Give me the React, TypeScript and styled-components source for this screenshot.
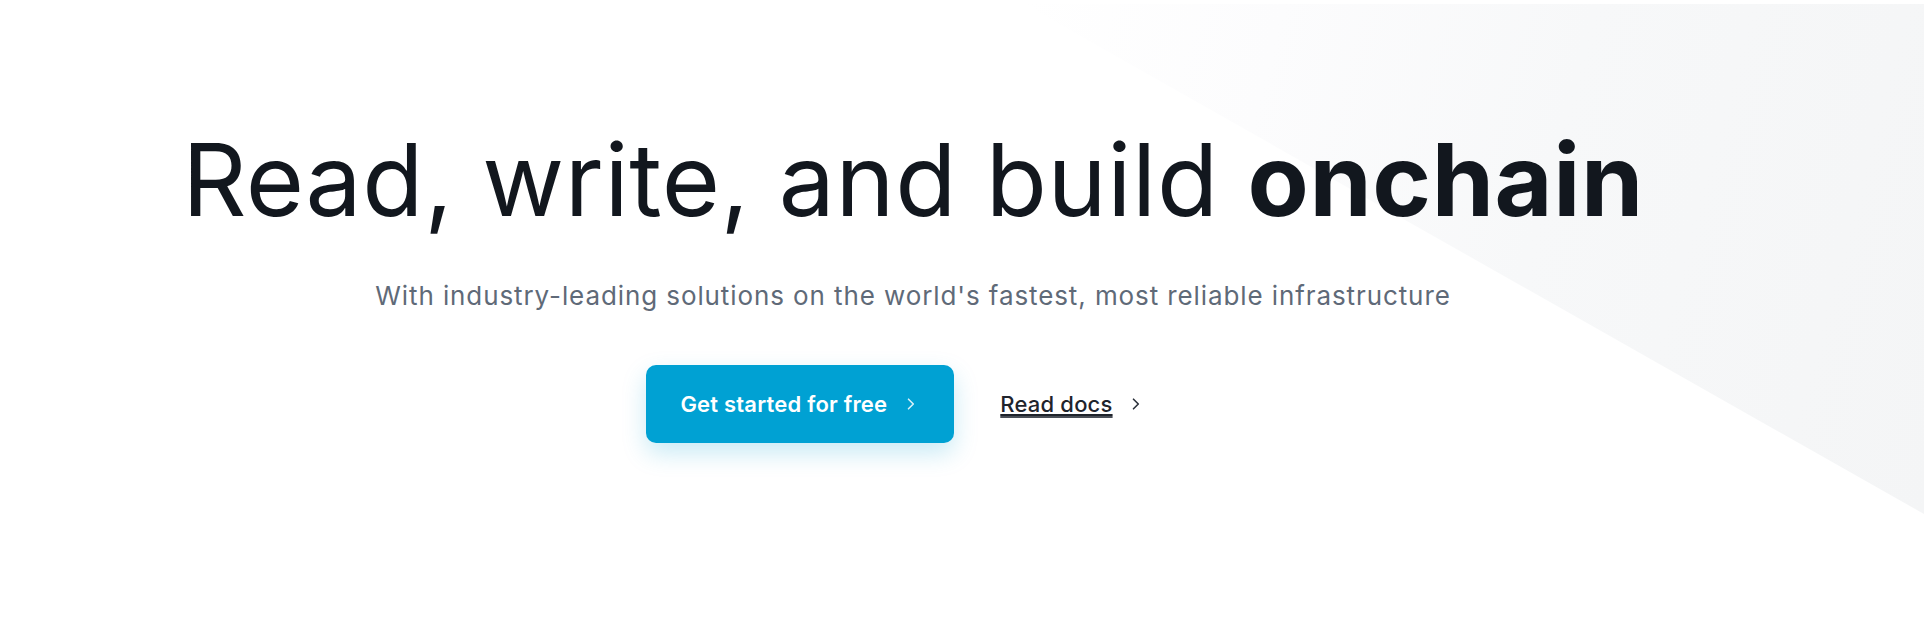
import { FC } from 'react';
import styled, { createGlobalStyle } from 'styled-components';

const Global = createGlobalStyle`
  html, body{
    margin: 0;
    padding: 0;
    background: #ffffff;
  }
  body{
    font-family: Inter, "Noto Sans", sans-serif;
    -webkit-font-smoothing: antialiased;
  }
`

const Hero = styled.section`
  position: relative;
  width: 100%;
  height: 628px;
  overflow: hidden;
  box-sizing: border-box;
  padding: 120px 106px 0 0;
  display: flex;
  flex-direction: column;
  align-items: center;
  &::before{
    content: '';
    position: absolute;
    top: 4px;
    right: 8px;
    width: 900px;
    height: 510px;
    clip-path: polygon(0 0, 100% 0, 100% 100%);
    background: linear-gradient(105deg, #ffffff 0%, #fcfcfd 25%, #f7f8f9 55%, #f4f5f6 100%);
    z-index: 0;
  }
`

const Title = styled.h1`
  position: relative;
  z-index: 1;
  margin: 0;
  font: 400 100px/120px Inter, sans-serif;
  letter-spacing: 0.6px;
  color: #12171e;
  white-space: nowrap;
  b{
    font-weight: 700;
  }
`

const Subtitle = styled.p`
  position: relative;
  z-index: 1;
  margin: 38px 0 0;
  font: 400 26px/36px Inter, sans-serif;
  letter-spacing: 0.9px;
  color: #5f6a78;
  white-space: nowrap;
`

const Actions = styled.div`
  position: relative;
  z-index: 1;
  margin: 51px 40px 0 0;
  display: flex;
  align-items: center;
  gap: 46px;
`

const PrimaryButton = styled.a`
  display: flex;
  align-items: center;
  gap: 20px;
  height: 78px;
  box-sizing: border-box;
  padding: 0 39px 0 34px;
  border-radius: 10px;
  background: #00a1d3;
  color: #ffffff;
  font: 600 22px Inter, sans-serif;
  letter-spacing: 0.2px;
  text-decoration: none;
  box-shadow: 0 10px 24px rgba(0, 161, 211, 0.22);
  svg{
    opacity: 0.85;
  }
`

const DocsLink = styled.a`
  display: flex;
  align-items: center;
  gap: 19px;
  color: #1f242c;
  font: 500 22px Inter, sans-serif;
  letter-spacing: 0.2px;
  span{
    text-decoration: underline;
    text-decoration-color: #4a4f57;
    text-underline-offset: 4px;
    text-decoration-thickness: 1.5px;
  }
`

const Chevron: FC<{ color: string }> = ({ color }) => (
  <svg width="8" height="12" viewBox="0 0 8 12" fill="none">
    <path d="M1.5 1.2L6.3 6L1.5 10.8" stroke={color} strokeWidth="1.6" strokeLinecap="round" strokeLinejoin="round" />
  </svg>
)

const App: FC = () => {
  return (
    <>
      <Global />
      <Hero>
        <Title>Read, write, and build <b>onchain</b></Title>
        <Subtitle>With industry-leading solutions on the world's fastest, most reliable infrastructure</Subtitle>
        <Actions>
          <PrimaryButton href="#">
            Get started for free
            <Chevron color="#ffffff" />
          </PrimaryButton>
          <DocsLink href="#">
            <span>Read docs</span>
            <Chevron color="#2b313b" />
          </DocsLink>
        </Actions>
      </Hero>
    </>
  )
}

export default App
